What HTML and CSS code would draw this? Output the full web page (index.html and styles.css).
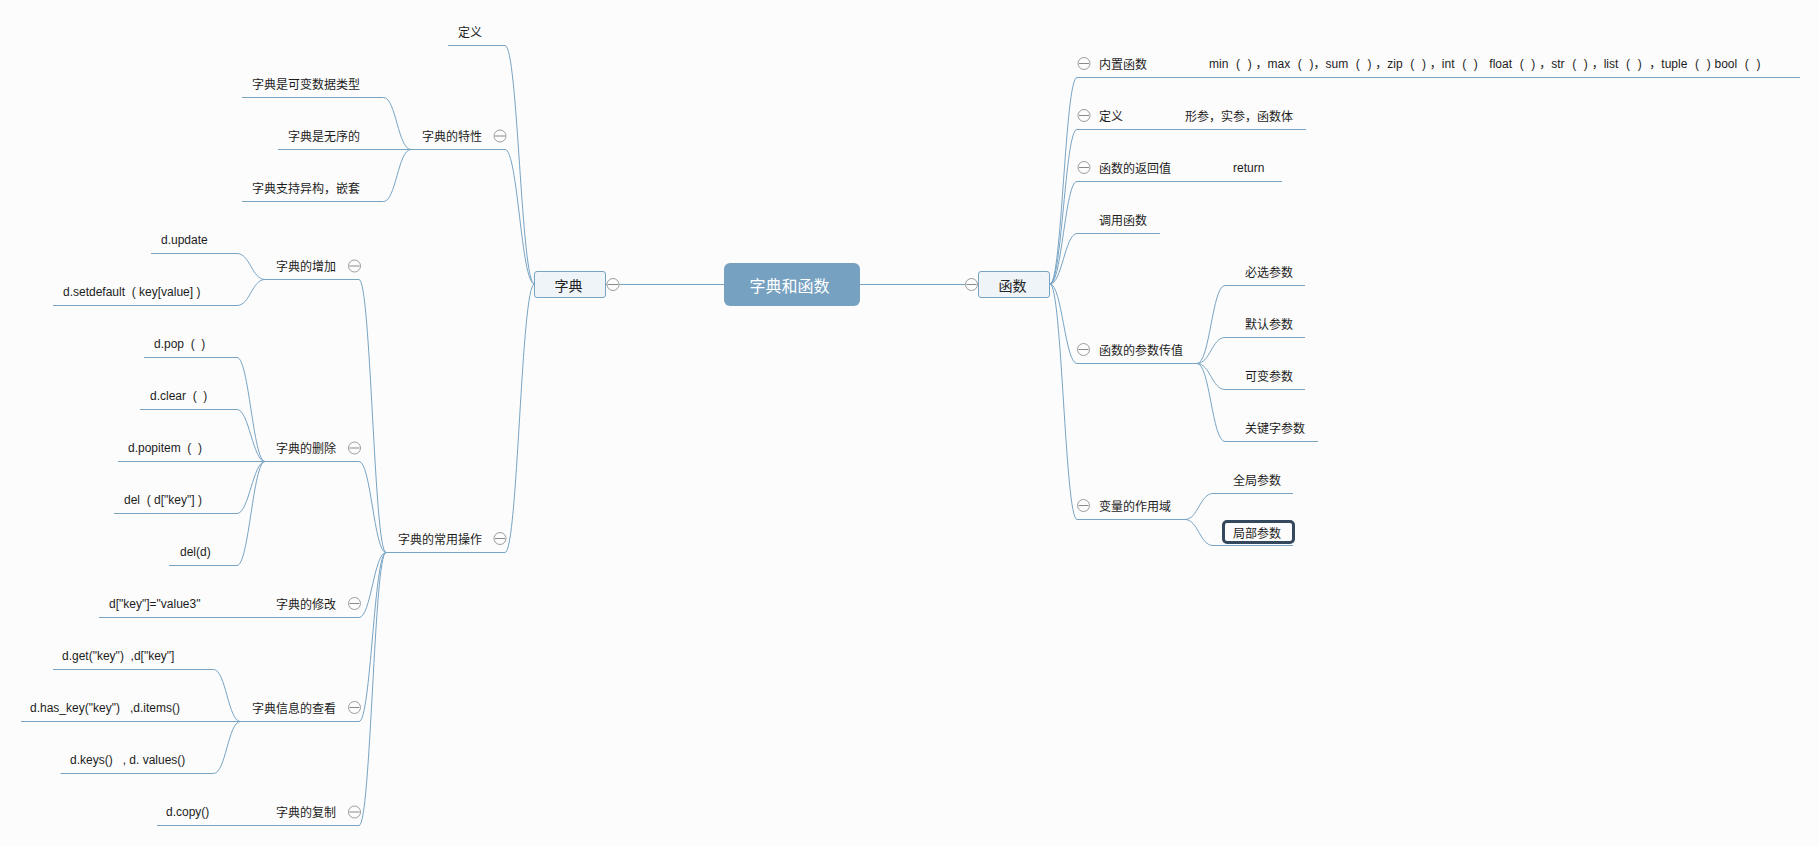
FILE: index.html
```html
<!DOCTYPE html>
<html lang="zh-CN">
<head>
<meta charset="utf-8">
<title>字典和函数</title>
<link rel="stylesheet" href="styles.css">
</head>
<body>
<main class="map">
  <svg class="links" width="1819" height="846" viewBox="0 0 1819 846" aria-hidden="true">
    <defs>
      <g id="fold">
        <circle r="6" class="fold-ring"/>
        <path d="M-5 0H5" class="fold-bar"/>
      </g>
    </defs>
    <path d="M605 284.500H724M860 284.500H978"/>
    <path d="M448 45.500H505C518 45.500 521 284 534.500 284"/>
    <path d="M411 149.500H505C518 149.500 521 284 534.500 284"/>
    <path d="M386 552.500H505C518 552.500 521 284 534.500 284"/>
    <path d="M242 97.500H383.500C396 97.500 398 149.500 411 149.500"/>
    <path d="M278 149.500H411"/>
    <path d="M242 201.500H383.500C396 201.500 398 149.500 411 149.500"/>
    <path d="M265 279.500H359C371 279.500 374 552.500 386 552.500"/>
    <path d="M265 461.500H359C371 461.500 374 552.500 386 552.500"/>
    <path d="M99 617.500H359C371 617.500 374 552.500 386 552.500"/>
    <path d="M240.500 721.500H359C371 721.500 374 552.500 386 552.500"/>
    <path d="M157 825.500H359C371 825.500 374 552.500 386 552.500"/>
    <path d="M151 253.500H237C250 253.500 252 279.500 265 279.500"/>
    <path d="M53 305.500H237C250 305.500 252 279.500 265 279.500"/>
    <path d="M144 357.500H237C249 357.500 253 461.500 265 461.500"/>
    <path d="M140 409.500H237C249 409.500 253 461.500 265 461.500"/>
    <path d="M118 461.500H265"/>
    <path d="M114 513.500H237C249 513.500 253 461.500 265 461.500"/>
    <path d="M169 565.500H237C249 565.500 253 461.500 265 461.500"/>
    <path d="M53 669.500H213.500C226 669.500 228 721.500 240.500 721.500"/>
    <path d="M21 721.500H240.500"/>
    <path d="M60.500 773.500H213.500C226 773.500 228 721.500 240.500 721.500"/>
    <path d="M1800 77.500H1077C1065 77.500 1062 284 1050 284"/>
    <path d="M1306 129.500H1077C1065 129.500 1062 284 1050 284"/>
    <path d="M1282 181.500H1077C1065 181.500 1062 284 1050 284"/>
    <path d="M1160 233.500H1077C1065 233.500 1062 284 1050 284"/>
    <path d="M1197 363.500H1077C1065 363.500 1062 284 1050 284"/>
    <path d="M1185 519.500H1077C1065 519.500 1062 284 1050 284"/>
    <path d="M1305 285.500H1225C1212 285.500 1210 363.500 1197 363.500"/>
    <path d="M1305 337.500H1225C1212 337.500 1210 363.500 1197 363.500"/>
    <path d="M1305 389.500H1225C1212 389.500 1210 363.500 1197 363.500"/>
    <path d="M1318 441.500H1225C1212 441.500 1210 363.500 1197 363.500"/>
    <path d="M1293 493.500H1213C1200 493.500 1198 519.500 1185 519.500"/>
    <path d="M1293 545.500H1213C1200 545.500 1198 519.500 1185 519.500"/>
    <use href="#fold" x="613" y="284.500"/>
    <use href="#fold" x="971.500" y="284.500"/>
    <use href="#fold" x="500" y="136"/>
    <use href="#fold" x="500" y="538.500"/>
    <use href="#fold" x="354.500" y="266"/>
    <use href="#fold" x="354.500" y="448"/>
    <use href="#fold" x="354.500" y="603.500"/>
    <use href="#fold" x="354.500" y="707.500"/>
    <use href="#fold" x="354.500" y="812"/>
    <use href="#fold" x="1084" y="63.500"/>
    <use href="#fold" x="1084" y="115.500"/>
    <use href="#fold" x="1084" y="167.500"/>
    <use href="#fold" x="1083.500" y="349.500"/>
    <use href="#fold" x="1083.500" y="505.500"/>
  </svg>

  <div class="central">字典和函数</div>
  <div class="main-topic topic-dict">字典</div>
  <div class="main-topic topic-func">函数</div>

  <span class="node cn d-def">定义</span>
  <span class="node cn d-traits">字典的特性</span>
  <span class="node cn d-t1">字典是可变数据类型</span>
  <span class="node cn d-t2">字典是无序的</span>
  <span class="node cn d-t3">字典支持异构&#xFF0C;嵌套</span>
  <span class="node cn d-ops">字典的常用操作</span>
  <span class="node cn d-add">字典的增加</span>
  <span class="node d-a1">d.update</span>
  <span class="node d-a2">d.setdefault  ( key[value] )</span>
  <span class="node cn d-del">字典的删除</span>
  <span class="node d-r1">d.pop  (  )</span>
  <span class="node d-r2">d.clear  (  )</span>
  <span class="node d-r3">d.popitem  (  )</span>
  <span class="node d-r4">del  ( d["key"] )</span>
  <span class="node d-r5">del(d)</span>
  <span class="node cn d-mod">字典的修改</span>
  <span class="node d-m1">d["key"]="value3"</span>
  <span class="node cn d-info">字典信息的查看</span>
  <span class="node d-i1">d.get("key")  ,d["key"]</span>
  <span class="node d-i2">d.has_key("key")   ,d.items()</span>
  <span class="node d-i3">d.keys()   , d. values()</span>
  <span class="node cn d-copy">字典的复制</span>
  <span class="node d-c1">d.copy()</span>

  <span class="node cn f-built">内置函数</span>
  <span class="node f-b1">min  (  ) &#xFF0C;max  (  )&#xFF0C;sum  (  ) &#xFF0C;zip  (  ) &#xFF0C;int  (  )   float  (  ) &#xFF0C;str  (  ) &#xFF0C;list  (  )  &#xFF0C;tuple  (  ) bool  (  )</span>
  <span class="node cn f-def">定义</span>
  <span class="node cn f-d1">形参&#xFF0C;实参&#xFF0C;函数体</span>
  <span class="node cn f-ret">函数的返回值</span>
  <span class="node f-r1">return</span>
  <span class="node cn f-call">调用函数</span>
  <span class="node cn f-args">函数的参数传值</span>
  <span class="node cn f-p1">必选参数</span>
  <span class="node cn f-p2">默认参数</span>
  <span class="node cn f-p3">可变参数</span>
  <span class="node cn f-p4">关键字参数</span>
  <span class="node cn f-scope">变量的作用域</span>
  <span class="node cn f-s1">全局参数</span>
  <span class="node selected">局部参数</span>
</main>
</body>
</html>
```
FILE: styles.css
```css
html, body {
  margin: 0;
  padding: 0;
  background: #fcfcfc;
}

.map {
  position: relative;
  width: 1819px;
  height: 846px;
  overflow: hidden;
  background: #fcfcfc;
  color: #1c1c1c;
  font-family: "Liberation Sans", "Noto Sans CJK SC", sans-serif;
  font-size: 12px;
}

.links {
  position: absolute;
  left: 0;
  top: 0;
}

.links path {
  fill: none;
  stroke: #78a4c4;
  stroke-width: 1;
}

.links .fold-ring {
  fill: #fcfcfc;
  stroke: #9c9c9c;
  stroke-width: 1;
}

.links .fold-bar {
  stroke: #8a8a8a;
}

.central {
  position: absolute;
  left: 724px;
  top: 263px;
  box-sizing: border-box;
  width: 136px;
  height: 43px;
  padding-right: 5px;
  display: flex;
  align-items: center;
  justify-content: center;
  background: #76a1c0;
  border-radius: 6px;
  color: #fff;
  font-size: 16px;
}

.main-topic {
  position: absolute;
  top: 271px;
  box-sizing: border-box;
  width: 72px;
  height: 27px;
  padding-right: 3px;
  display: flex;
  align-items: center;
  justify-content: center;
  background: #eef4f8;
  border: 1px solid #78a4c4;
  border-radius: 3px;
  color: #222;
  font-size: 14px;
}

.topic-dict { left: 534px; }
.topic-func { left: 978px; }

.node {
  position: absolute;
  line-height: 16px;
  white-space: pre;
}

.cn { margin-top: 1px; }

.d-def { left: 458px; top: 24px; }
.d-traits { left: 422px; top: 128px; }
.d-t1 { left: 252px; top: 76px; }
.d-t2 { left: 288px; top: 128px; }
.d-t3 { left: 252px; top: 180px; }
.d-ops { left: 398px; top: 531px; }
.d-add { left: 276px; top: 258px; }
.d-a1 { left: 161px; top: 232px; }
.d-a2 { left: 63px; top: 284px; }
.d-del { left: 276px; top: 440px; }
.d-r1 { left: 154px; top: 336px; }
.d-r2 { left: 150px; top: 388px; }
.d-r3 { left: 128px; top: 440px; }
.d-r4 { left: 124px; top: 492px; }
.d-r5 { left: 180px; top: 544px; }
.d-mod { left: 276px; top: 596px; }
.d-m1 { left: 109px; top: 596px; }
.d-info { left: 252px; top: 700px; }
.d-i1 { left: 62px; top: 648px; }
.d-i2 { left: 30px; top: 700px; }
.d-i3 { left: 70px; top: 752px; }
.d-copy { left: 276px; top: 804px; }
.d-c1 { left: 166px; top: 804px; }

.f-built { left: 1099px; top: 56px; }
.f-b1 { left: 1209px; top: 56px; word-spacing: 0.5px; }
.f-def { left: 1099px; top: 108px; }
.f-d1 { left: 1185px; top: 108px; }
.f-ret { left: 1099px; top: 160px; }
.f-r1 { left: 1233px; top: 160px; }
.f-call { left: 1099px; top: 212px; }
.f-args { left: 1099px; top: 342px; }
.f-p1 { left: 1245px; top: 264px; }
.f-p2 { left: 1245px; top: 316px; }
.f-p3 { left: 1245px; top: 368px; }
.f-p4 { left: 1245px; top: 420px; }
.f-scope { left: 1099px; top: 498px; }
.f-s1 { left: 1233px; top: 472px; }

.selected {
  left: 1222px;
  top: 520px;
  box-sizing: border-box;
  width: 73px;
  height: 24px;
  padding: 1px 0 0 8px;
  line-height: 20px;
  border: 3px solid #34495e;
  border-radius: 5px;
}
```
